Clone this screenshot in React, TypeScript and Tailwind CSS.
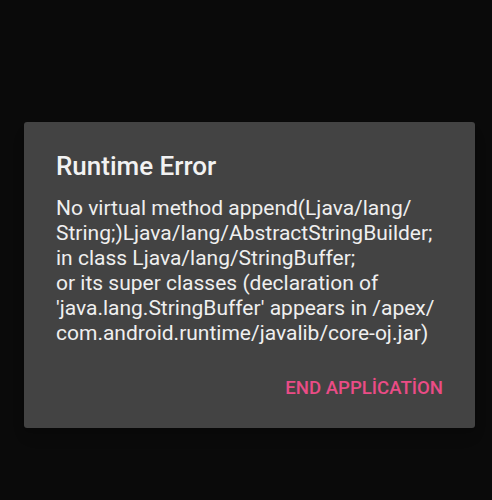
export default function App() {
  const lines = [
    'No virtual method append(Ljava/lang/',
    'String;)Ljava/lang/AbstractStringBuilder;',
    'in class Ljava/lang/StringBuffer;',
    'or its super classes (declaration of',
    "'java.lang.StringBuffer' appears in /apex/",
    'com.android.runtime/javalib/core-oj.jar)',
  ];

  return (
    <div className="h-[500px] w-full bg-[#0a0a0a] pt-[122px] font-['Roboto',sans-serif]">
      <div className="ml-6 h-[306px] w-[451px] rounded-[3px] bg-[#434343] shadow-lg">
        <div className="px-8 pt-[26px]">
          <h1 className="text-[26px] font-medium leading-[36px] text-[#f2f2f2]">Runtime Error</h1>
          <p className="mt-[12px] text-[21px] leading-[25px] text-[#efefef]">
            {lines.map((l, i) => (
              <span key={i} className="block whitespace-nowrap">{l}</span>
            ))}
          </p>
        </div>
        <div className="flex justify-end px-8 pt-[30px]">
          <button className="text-[18.6px] font-medium leading-6 text-[#ea4c86]">END APPLİCATİON</button>
        </div>
      </div>
    </div>
  );
}
